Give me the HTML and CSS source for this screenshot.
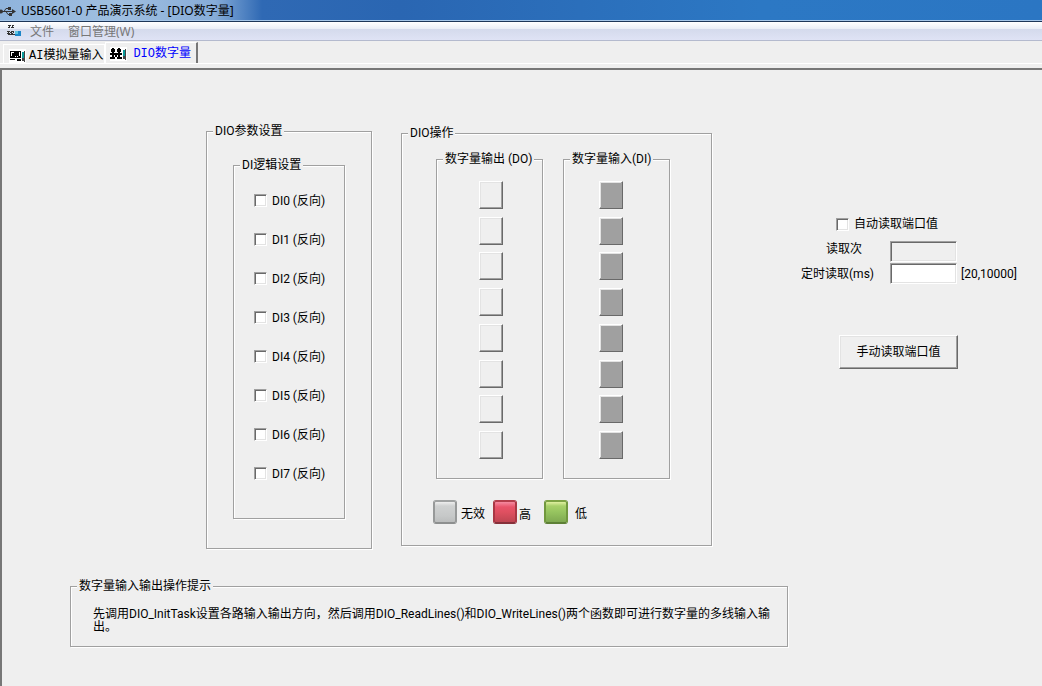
FILE: index.html
```html
<!DOCTYPE html>
<html lang="zh-CN">
<head>
<meta charset="utf-8">
<title>USB5601-0 产品演示系统</title>
<link rel="stylesheet" href="styles.css">
</head>
<body>
<header class="titlebar">
  <svg class="usb-icon" width="16" height="16" viewBox="0 0 16 16" fill="none" stroke="#333" stroke-width="1">
    <path d="M0 8.500H13M4 8.500L6 5.500H9M6 8.500L8 11.500H10"/>
    <path d="M12 6L16 8.500L12 11Z" fill="#333" stroke="none"/>
    <circle cx="1" cy="8.500" r="2" fill="#333" stroke="none"/>
    <path d="M8 4h3v3H8zM9 10h3v3H9z" fill="#333" stroke="none"/>
  </svg>
  <h1 class="title">USB5601-0 产品演示系统 - [DIO数字量]</h1>
</header>
<nav class="menubar">
  <svg class="app-icon" width="16" height="14" viewBox="0 0 16 14">
    <path d="M2 1h3v1H2zM6 1h2v1H6zM3 2h1v1H3zM6 2h1v1H6zM2 3h2v1H2zM5 3h3v1H5zM1 7h3v1H1zM5 7h3v1H5zM2 8h1v1H2zM4 8h2v1H4zM7 8h1v1H7zM1 9h3v1H1zM5 9h2v1H5zM2 10h7v1H2z" fill="#333"/>
    <path d="M9 7h6v5H9z" fill="#1d86c8"/><path d="M9 7h3v3H9z" fill="#5fc6e0"/>
  </svg>
  <button class="menu-item" type="button">文件</button>
  <button class="menu-item" type="button">窗口管理(W)</button>
</nav>
<div class="tabs" role="tablist">
  <button class="tab" type="button" role="tab" aria-selected="false">
    <svg width="17" height="14" viewBox="0 0 17 14"><path d="M0 0h17v14H0z" fill="#fff"/><path d="M1 2h11v7H1zM1 10h5v1H1zM8 10h4v2H8z" fill="#000"/><path d="M2 3h3v4H2zM6 7h1v1H6zM8 7h1v1H8zM10 3h1v4h-1z" fill="#fff"/><path d="M3 4h7v3H3z" fill="#000"/><path d="M13 3h2v9h-2z" fill="#0a9a9a"/><path d="M15 2h1v11h-1zM13 9h2v3h-2z" fill="#444"/></svg>
    <span>AI模拟量输入</span>
  </button>
  <button class="tab tab-active" type="button" role="tab" aria-selected="true">
    <svg width="17" height="14" viewBox="0 0 17 14"><path d="M0 0h17v14H0z" fill="#fff"/><path d="M1 2h4v3H1zM7 2h4v3H7zM0 6h12v2H0zM2 1h2v10H2zM8 1h2v10H8zM0 10h5v2H0zM7 10h5v2H7zM5 7h2v3H5z" fill="#000"/><path d="M13 3h2v9h-2z" fill="#0a9a9a"/><path d="M15 2h1v11h-1zM13 9h2v3h-2z" fill="#444"/></svg>
    <span>DIO数字量</span>
  </button>
</div>
<main class="workspace">
  <div class="panels">
    <fieldset class="group params">
      <legend>DIO参数设置</legend>
      <fieldset class="group logic">
        <legend>DI逻辑设置</legend>
        <label class="check"><input type="checkbox">DI0 (反向)</label>
        <label class="check"><input type="checkbox">DI1 (反向)</label>
        <label class="check"><input type="checkbox">DI2 (反向)</label>
        <label class="check"><input type="checkbox">DI3 (反向)</label>
        <label class="check"><input type="checkbox">DI4 (反向)</label>
        <label class="check"><input type="checkbox">DI5 (反向)</label>
        <label class="check"><input type="checkbox">DI6 (反向)</label>
        <label class="check"><input type="checkbox">DI7 (反向)</label>
      </fieldset>
    </fieldset>
    <fieldset class="group operate">
      <legend>DIO操作</legend>
      <div class="ports">
        <fieldset class="group port">
          <legend>数字量输出 (DO)</legend>
          <div class="lines lines-out">
            <button class="line" type="button" aria-label="DO0"></button>
            <button class="line" type="button" aria-label="DO1"></button>
            <button class="line" type="button" aria-label="DO2"></button>
            <button class="line" type="button" aria-label="DO3"></button>
            <button class="line" type="button" aria-label="DO4"></button>
            <button class="line" type="button" aria-label="DO5"></button>
            <button class="line" type="button" aria-label="DO6"></button>
            <button class="line" type="button" aria-label="DO7"></button>
          </div>
        </fieldset>
        <fieldset class="group port">
          <legend>数字量输入(DI)</legend>
          <div class="lines lines-in">
            <button class="line" type="button" aria-label="DI0"></button>
            <button class="line" type="button" aria-label="DI1"></button>
            <button class="line" type="button" aria-label="DI2"></button>
            <button class="line" type="button" aria-label="DI3"></button>
            <button class="line" type="button" aria-label="DI4"></button>
            <button class="line" type="button" aria-label="DI5"></button>
            <button class="line" type="button" aria-label="DI6"></button>
            <button class="line" type="button" aria-label="DI7"></button>
          </div>
        </fieldset>
      </div>
      <div class="states">
        <span class="state"><i class="lamp lamp-none"></i><span class="state-name">无效</span></span>
        <span class="state state-high"><i class="lamp lamp-high"></i><span class="state-name">高</span></span>
        <span class="state state-low"><i class="lamp lamp-low"></i><span class="state-name">低</span></span>
      </div>
    </fieldset>
    <form class="reading">
      <label class="auto"><input type="checkbox">自动读取端口值</label>
      <div class="fields">
        <label class="count-label" for="count">读取次</label>
        <input class="field field-off" id="count" type="text" readonly>
        <span></span>
        <label for="interval">定时读取(ms)</label>
        <input class="field" id="interval" type="text">
        <span class="range">[20,10000]</span>
      </div>
      <button class="read-button" type="button">手动读取端口值</button>
    </form>
  </div>
  <fieldset class="group hint">
    <legend>数字量输入输出操作提示</legend>
    <p>先调用DIO_InitTask设置各路输入输出方向，然后调用DIO_ReadLines()和DIO_WriteLines()两个函数即可进行数字量的多线输入输出。</p>
  </fieldset>
</main>
</body>
</html>
```
FILE: styles.css
```css
* { box-sizing: border-box; }
body {
  margin: 0;
  min-height: 100vh;
  display: flex;
  flex-direction: column;
  background: #efefef;
  color: #000;
  font: 12px/16px Roboto, "Noto Sans CJK SC", sans-serif;
}
button, input { font: inherit; color: inherit; margin: 0; }
button { padding: 0; border: 0; background: none; }

.titlebar {
  height: 22px;
  display: flex;
  align-items: center;
  gap: 5px;
  border-bottom: 1px solid #1d3658;
  box-shadow: inset 0 -1px #a5c6e8;
  background: linear-gradient(90deg, #8fb4dc 0, #a0bfe0 120px, #86acd8 215px, #2f69b4 262px, #2a66b2 400px, #2c78c4 760px, #2b76c3 100%);
}
.title { margin: 0; font: 12px/20px "Noto Sans", "Noto Sans CJK SC", sans-serif; }
.menubar {
  height: 19px;
  display: flex;
  align-items: center;
  border-bottom: 1px solid #b4bace;
  background: linear-gradient(#fff 0, #e9edf6 7px, #d4daec 7px, #dfe3f5 100%);
}
.app-icon { margin: 0 8px 0 6px; }
.menu-item {
  margin-right: 14px;
  padding-top: 2px;
  color: #777;
  font-family: "Noto Sans", "Noto Sans CJK SC", sans-serif;
}

.tabs {
  display: flex;
  align-items: flex-end;
  height: 23px;
  padding-left: 3px;
  border-bottom: 1px solid #fff;
}
.tab {
  display: flex;
  align-items: center;
  gap: 3px;
  height: 19px;
  padding: 3px 1px 0 5px;
  border: 1px solid #fff;
  border-bottom: 0;
  font-family: "Liberation Mono", "Noto Sans CJK SC", monospace;
}
.tab-active {
  gap: 6px;
  height: 21px;
  padding: 1px 5px 0 4px;
  border-right: 2px solid #777;
  color: #00f;
}

.workspace {
  flex: 1;
  margin-top: 4px;
  padding-top: 53px;
  border-top: 2px solid #777;
  border-left: 2px solid #777;
}
.panels {
  display: grid;
  grid-template-columns: minmax(0, 166fr) minmax(0, 311fr) minmax(0, 272fr);
  column-gap: 29px;
  align-items: start;
  padding: 0 29px 0 204px;
}
.group {
  min-width: 0;
  margin: 0;
  padding: 0;
  border: 1px solid #a0a0a0;
  box-shadow: 1px 1px #fff, inset 1px 1px #fff;
}
.group > legend {
  margin-left: 6px;
  padding: 0 2px;
  background: #efefef;
  white-space: nowrap;
}
.params { padding: 18px 0 29px; }
.logic { margin: 0 26px; padding: 8px 0 25px; }
.check {
  display: flex;
  align-items: center;
  gap: 5px;
  height: 39px;
  padding-left: 20px;
  white-space: nowrap;
}
input[type="checkbox"] {
  appearance: none;
  flex: none;
  width: 13px;
  height: 13px;
  background: #fff;
  border: 1px solid;
  border-color: #a0a0a0 #fff #fff #a0a0a0;
  box-shadow: inset 1px 1px #696969, inset -1px -1px #e3e3e3;
}

.operate { margin-top: 2px; padding: 10px 0 21px; }
.ports {
  display: grid;
  grid-template-columns: 1fr 1fr;
  gap: 20px;
  margin: 0 41px 0 34px;
}
.port { padding: 14px 0 19px; }
.lines {
  display: flex;
  flex-direction: column;
  justify-content: space-between;
  height: 278px;
}
.lines-out { padding-left: 42px; }
.lines-in { padding-left: 35px; }
.line {
  width: 24px;
  height: 28px;
}
.line, .read-button {
  border: 1px solid;
  border-color: #fff #696969 #696969 #fff;
  box-shadow: inset -1px -1px #a0a0a0, inset 1px 1px #e3e3e3;
}
.lines-in .line { background: #a0a0a0; }
.states {
  display: flex;
  align-items: center;
  gap: 8px;
  margin: 21px 0 0 31px;
}
.state { display: flex; align-items: center; gap: 4px; }
.state-name { padding-top: 3px; }
.state-high { gap: 2px; }
.state-high .state-name { padding-top: 6px; }
.state-low { gap: 7px; margin-left: 5px; }
.lamp {
  width: 24px;
  height: 24px;
  border: 2px solid;
  border-radius: 3px;
}
.lamp-none { border-color: #a0a2a2 #979999 #8d8f8f; background: linear-gradient(#eee 0, #cfd1d1 4px, #c6c8c8 70%, #bbbdbd); }
.lamp-high { border-color: #b33d4b #a93744 #86303a; background: linear-gradient(#f58aa0 0, #e8536a 5px, #df5060 50%, #be4551); }
.lamp-low { border-color: #7ea344 #71983e #5d8036; background: linear-gradient(#e0f0a0 0, #a8d069 4px, #96c45f 50%, #7fa951); }

.reading { padding: 93px 0 0 60px; }
.auto { display: flex; align-items: center; gap: 5px; padding-left: 35px; }
.fields {
  display: grid;
  grid-template-columns: 89px 67px 1fr;
  row-gap: 1px;
  align-items: center;
  margin-top: 9px;
  white-space: nowrap;
}
.count-label { align-self: start; padding-left: 25px; }
.field {
  width: 100%;
  height: 21px;
  padding: 0 3px;
  background: #fff;
  border: 1px solid;
  border-color: #a0a0a0 #fff #fff #a0a0a0;
  box-shadow: inset 1px 1px #696969, inset -1px -1px #e3e3e3;
}
.field-off { background: #efefef; }
.range { padding-left: 4px; }
.read-button {
  width: 119px;
  height: 34px;
  margin: 51px 0 0 38px;
}
.hint {
  margin: 29px 254px 0 68px;
  padding: 14px 0 12px;
}
.hint p { margin: 0 10px 0 22px; line-height: 13px; }
```
